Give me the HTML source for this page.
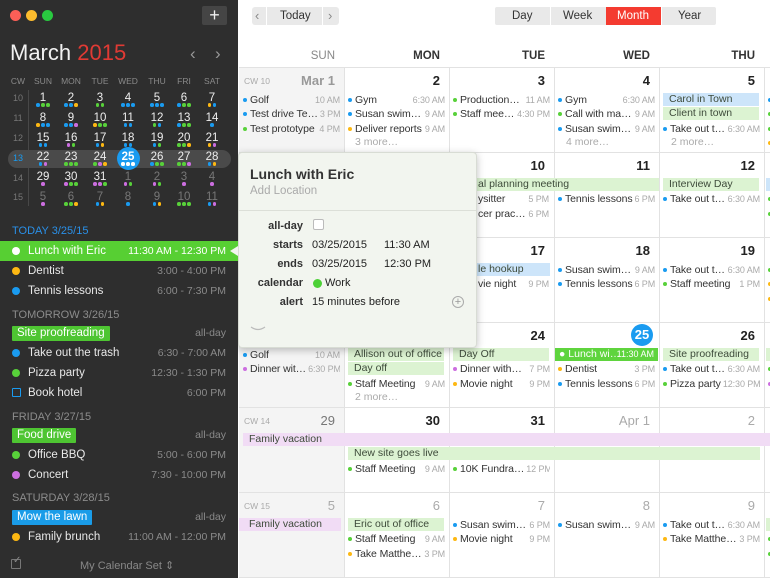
<!DOCTYPE html>
<html><head><meta charset="utf-8"><style>
*{margin:0;padding:0;box-sizing:border-box}
body{width:770px;height:578px;overflow:hidden;position:relative;font-family:"Liberation Sans",Arial,sans-serif;background:#fff}
.a{position:absolute;white-space:nowrap}
#sb{position:absolute;left:0;top:0;width:238px;height:578px;background:#2e2e2e;color:#e8e8e8}
.mh{position:absolute;top:76px;font-size:8.5px;color:#8a8a8a;width:28px;text-align:center;margin-left:-14px}
.mn{position:absolute;font-size:11.5px;color:#eee;width:28px;text-align:center;margin-left:-14px;line-height:13px}
.mn.gr{color:#777}
.cw{position:absolute;left:4px;width:28px;text-align:center;font-size:9px;color:#777}
.dd{position:absolute;width:28px;margin-left:-14px;text-align:center;font-size:0;line-height:4px}
.dd i{display:inline-block;width:3.5px;height:3.5px;border-radius:50%;margin:0 .7px}
.b{background:#1a9bf0}.g{background:#58d13a}.o{background:#fdb813}.p{background:#cc6ee0}.w{background:#fff}
.ah{position:absolute;left:12px;font-size:11px;color:#8c8c8c}
.ar{position:absolute;left:0;width:238px;height:20px;font-size:11.5px;line-height:20px;color:#e8e8e8}
.ar .dt{position:absolute;left:12px;top:6px;width:8px;height:8px;border-radius:50%}
.ar .n{position:absolute;left:28px}
.ar .t{position:absolute;right:12px;color:#8a8a8a;font-size:10.5px}
.chip{position:absolute;left:12px;height:15px;line-height:15px;padding:0 5px;font-size:11.5px;color:#fff;border-radius:1px}
.hd{position:absolute;top:50px;font-size:11.5px;width:96px;text-align:right;color:#333;font-weight:bold}
.vl{position:absolute;top:67px;width:1px;height:511px;background:#e2e2e2}
.hl{position:absolute;left:239px;width:531px;height:1px;background:#e2e2e2}
.dn{position:absolute;width:96px;text-align:right;font-size:13px;color:#222;font-weight:bold}
.dn.x{color:#aaa;font-weight:normal}
.e{position:absolute;width:97px;height:14px;font-size:10.5px;line-height:14px;color:#333;white-space:nowrap;display:flex;overflow:hidden;letter-spacing:-0.1px}
.e i{display:inline-block;width:4px;height:4px;border-radius:50%;margin:5px 3px 0 0;flex:none}
.e s{text-decoration:none;margin-left:auto;color:#aaa;font-size:9px;padding-left:2px;flex:none}
.mo{position:absolute;font-size:10.5px;color:#aaa}
.bar{position:absolute;height:13px;line-height:13px;font-size:10.5px;padding-left:6px;color:#3d4a3a;white-space:nowrap;overflow:hidden}
.gb{background:#dcf3d2}.bb{background:#cde5fa}.pb{background:#f1dcf5}
.cwl{position:absolute;font-size:8.5px;color:#aaa}
.pl{position:absolute;width:60px;text-align:right;left:243px;font-size:11px;color:#333;font-weight:bold}
.pv{position:absolute;left:312px;font-size:11px;color:#222}
</style></head><body>

<div class="a" style="left:252px;top:7px;width:87px;height:18px;background:#e9e9e9;border-radius:3px"></div>
<div class="a" style="left:266px;top:7px;width:1px;height:18px;background:#fff"></div>
<div class="a" style="left:322px;top:7px;width:1px;height:18px;background:#fff"></div>
<div class="a" style="left:255px;top:8px;font-size:13px;color:#888">‹</div>
<div class="a" style="left:328px;top:8px;font-size:13px;color:#888">›</div>
<div class="a" style="left:280px;top:10px;font-size:11.5px;color:#333">Today</div>
<div class="a" style="left:495px;top:7px;width:221px;height:18px;background:#e9e9e9;border-radius:2px"></div>
<div class="a" style="left:606px;top:7px;width:55px;height:18px;background:#f43b30"></div>
<div class="a" style="left:550px;top:7px;width:1px;height:18px;background:#fff"></div>
<div class="a" style="left:661px;top:7px;width:1px;height:18px;background:#fff"></div>
<div class="a" style="left:512px;top:10px;font-size:11.5px;color:#333">Day</div>
<div class="a" style="left:563px;top:10px;font-size:11.5px;color:#333">Week</div>
<div class="a" style="left:617px;top:10px;font-size:11.5px;color:#fff">Month</div>
<div class="a" style="left:678px;top:10px;font-size:11.5px;color:#333">Year</div>

<div class="a" style="left:239px;top:67px;width:105px;height:511px;background:#f4f4f4"></div>
<div class="hd" style="left:239px;color:#888;font-weight:normal">SUN</div>
<div class="hd" style="left:344px">MON</div>
<div class="hd" style="left:449px">TUE</div>
<div class="hd" style="left:554px">WED</div>
<div class="hd" style="left:659px">THU</div>
<div class="vl" style="left:344px"></div><div class="vl" style="left:449px"></div><div class="vl" style="left:554px"></div><div class="vl" style="left:659px"></div><div class="vl" style="left:764px"></div>
<div class="hl" style="top:67px"></div><div class="hl" style="top:152px"></div><div class="hl" style="top:237px"></div><div class="hl" style="top:322px"></div><div class="hl" style="top:407px"></div><div class="hl" style="top:492px"></div><div class="hl" style="top:577px"></div>

<div class="cwl" style="left:244px;top:76px">CW 10</div>
<div class="dn x" style="left:239px;top:73px;font-weight:bold;color:#999">Mar 1</div>
<div class="e" style="left:243px;top:93px"><i class="b"></i>Golf<s>10 AM</s></div>
<div class="e" style="left:243px;top:107px"><i class="b"></i>Test drive Te…<s>3 PM</s></div>
<div class="e" style="left:243px;top:122px"><i class="g"></i>Test prototype<s>4 PM</s></div>
<div class="dn" style="left:344px;top:73px">2</div>
<div class="e" style="left:348px;top:93px"><i class="b"></i>Gym<s>6:30 AM</s></div>
<div class="e" style="left:348px;top:107px"><i class="b"></i>Susan swim…<s>9 AM</s></div>
<div class="e" style="left:348px;top:122px"><i class="o"></i>Deliver reports<s>9 AM</s></div>
<div class="mo" style="left:355px;top:136px">3 more…</div>
<div class="dn" style="left:449px;top:73px">3</div>
<div class="e" style="left:453px;top:93px"><i class="g"></i>Production…<s>11 AM</s></div>
<div class="e" style="left:453px;top:107px"><i class="g"></i>Staff mee…<s>4:30 PM</s></div>
<div class="dn" style="left:554px;top:73px">4</div>
<div class="e" style="left:558px;top:93px"><i class="b"></i>Gym<s>6:30 AM</s></div>
<div class="e" style="left:558px;top:107px"><i class="g"></i>Call with ma…<s>9 AM</s></div>
<div class="e" style="left:558px;top:122px"><i class="b"></i>Susan swim…<s>9 AM</s></div>
<div class="mo" style="left:566px;top:136px">4 more…</div>
<div class="dn" style="left:659px;top:73px">5</div>
<div class="bar bb" style="left:663px;top:93px;width:96px">Carol in Town</div>
<div class="bar gb" style="left:663px;top:107px;width:96px">Client in town</div>
<div class="e" style="left:663px;top:122px"><i class="b"></i>Take out t…<s>6:30 AM</s></div>
<div class="mo" style="left:671px;top:136px">2 more…</div>
<div class="e" style="left:768px;top:93px"><i class="b"></i></div>
<div class="e" style="left:768px;top:107px"><i class="g"></i></div>
<div class="e" style="left:768px;top:122px"><i class="g"></i></div>
<div class="e" style="left:768px;top:136px"><i class="o"></i></div>

<div class="dn" style="left:449px;top:158px">10</div>
<div class="bar gb" style="left:449px;top:178px;width:210px;padding-left:29px">al planning meeting</div>
<div class="e" style="left:478px;top:192px;width:71px">ysitter<s>5 PM</s></div>
<div class="e" style="left:478px;top:207px;width:71px">cer prac…<s>6 PM</s></div>
<div class="dn" style="left:554px;top:158px">11</div>
<div class="e" style="left:558px;top:192px"><i class="b"></i>Tennis lessons<s>6 PM</s></div>
<div class="dn" style="left:659px;top:158px">12</div>
<div class="bar gb" style="left:663px;top:178px;width:96px">Interview Day</div>
<div class="e" style="left:663px;top:192px"><i class="b"></i>Take out t…<s>6:30 AM</s></div>
<div class="bar bb" style="left:766px;top:178px;width:10px"></div>
<div class="e" style="left:768px;top:192px"><i class="g"></i></div>
<div class="e" style="left:768px;top:207px"><i class="g"></i></div>

<div class="dn" style="left:449px;top:243px">17</div>
<div class="bar bb" style="left:449px;top:263px;width:101px;padding-left:29px">le hookup</div>
<div class="e" style="left:478px;top:277px;width:71px">vie night<s>9 PM</s></div>
<div class="dn" style="left:554px;top:243px">18</div>
<div class="e" style="left:558px;top:263px"><i class="b"></i>Susan swim…<s>9 AM</s></div>
<div class="e" style="left:558px;top:277px"><i class="b"></i>Tennis lessons<s>6 PM</s></div>
<div class="dn" style="left:659px;top:243px">19</div>
<div class="e" style="left:663px;top:263px"><i class="b"></i>Take out t…<s>6:30 AM</s></div>
<div class="e" style="left:663px;top:277px"><i class="g"></i>Staff meeting<s>1 PM</s></div>
<div class="e" style="left:768px;top:263px"><i class="g"></i></div>
<div class="e" style="left:768px;top:277px"><i class="o"></i></div>
<div class="e" style="left:768px;top:292px"><i class="o"></i></div>

<div class="e" style="left:243px;top:348px"><i class="b"></i>Golf<s>10 AM</s></div>
<div class="e" style="left:243px;top:362px"><i class="p"></i>Dinner wit…<s>6:30 PM</s></div>
<div class="bar gb" style="left:348px;top:348px;width:96px">Allison out of office</div>
<div class="bar gb" style="left:348px;top:362px;width:96px">Day off</div>
<div class="e" style="left:348px;top:377px"><i class="g"></i>Staff Meeting<s>9 AM</s></div>
<div class="mo" style="left:355px;top:391px">2 more…</div>
<div class="dn" style="left:449px;top:328px">24</div>
<div class="bar gb" style="left:453px;top:348px;width:96px">Day Off</div>
<div class="e" style="left:453px;top:362px"><i class="p"></i>Dinner with…<s>7 PM</s></div>
<div class="e" style="left:453px;top:377px"><i class="o"></i>Movie night<s>9 PM</s></div>
<div class="a" style="left:631px;top:324px;width:22px;height:22px;border-radius:50%;background:#1a9bf0;color:#fff;font-size:13px;font-weight:bold;text-align:center;line-height:22px">25</div>
<div class="bar" style="left:555px;top:348px;width:103px;background:#5fd43e;color:#fff;padding-left:4px">● Lunch wi… <span style="font-size:9px;position:absolute;right:4px">11:30 AM</span></div>
<div class="e" style="left:558px;top:362px"><i class="o"></i>Dentist<s>3 PM</s></div>
<div class="e" style="left:558px;top:377px"><i class="b"></i>Tennis lessons<s>6 PM</s></div>
<div class="dn" style="left:659px;top:328px">26</div>
<div class="bar gb" style="left:663px;top:348px;width:96px">Site proofreading</div>
<div class="e" style="left:663px;top:362px"><i class="b"></i>Take out t…<s>6:30 AM</s></div>
<div class="e" style="left:663px;top:377px"><i class="g"></i>Pizza party<s>12:30 PM</s></div>
<div class="bar gb" style="left:766px;top:348px;width:10px"></div>
<div class="e" style="left:768px;top:362px"><i class="g"></i></div>
<div class="e" style="left:768px;top:377px"><i class="p"></i></div>

<div class="cwl" style="left:244px;top:416px">CW 14</div>
<div class="dn" style="left:239px;top:413px;color:#777;font-weight:normal">29</div>
<div class="dn" style="left:344px;top:413px">30</div>
<div class="dn" style="left:449px;top:413px">31</div>
<div class="dn x" style="left:554px;top:413px">Apr 1</div>
<div class="dn x" style="left:659px;top:413px">2</div>
<div class="bar pb" style="left:243px;top:433px;width:527px">Family vacation</div>
<div class="bar gb" style="left:348px;top:447px;width:412px">New site goes live</div>
<div class="e" style="left:348px;top:462px"><i class="g"></i>Staff Meeting<s>9 AM</s></div>
<div class="e" style="left:453px;top:462px"><i class="g"></i>10K Fundra…<s>12 PM</s></div>

<div class="cwl" style="left:244px;top:501px">CW 15</div>
<div class="dn x" style="left:239px;top:498px">5</div>
<div class="dn x" style="left:344px;top:498px">6</div>
<div class="dn x" style="left:449px;top:498px">7</div>
<div class="dn x" style="left:554px;top:498px">8</div>
<div class="dn x" style="left:659px;top:498px">9</div>
<div class="bar pb" style="left:239px;top:518px;width:102px;padding-left:10px">Family vacation</div>
<div class="bar gb" style="left:348px;top:518px;width:96px">Eric out of office</div>
<div class="e" style="left:348px;top:532px"><i class="g"></i>Staff Meeting<s>9 AM</s></div>
<div class="e" style="left:348px;top:547px"><i class="o"></i>Take Matthe…<s>3 PM</s></div>
<div class="e" style="left:453px;top:518px"><i class="b"></i>Susan swim…<s>6 PM</s></div>
<div class="e" style="left:453px;top:532px"><i class="o"></i>Movie night<s>9 PM</s></div>
<div class="e" style="left:558px;top:518px"><i class="b"></i>Susan swim…<s>9 AM</s></div>
<div class="e" style="left:663px;top:518px"><i class="b"></i>Take out t…<s>6:30 AM</s></div>
<div class="e" style="left:663px;top:532px"><i class="o"></i>Take Matthe…<s>3 PM</s></div>
<div class="bar gb" style="left:766px;top:518px;width:10px"></div>
<div class="e" style="left:768px;top:532px"><i class="g"></i></div>
<div class="e" style="left:768px;top:547px"><i class="g"></i></div>

<div class="a" style="left:238px;top:152px;width:239px;height:196px;background:#f2f5ef;border:1px solid #d8dcd4;border-radius:4px;box-shadow:0 2px 8px rgba(0,0,0,.25)"></div>
<div class="a" style="left:250px;top:166px;font-size:14px;font-weight:bold;color:#333">Lunch with Eric</div>
<div class="a" style="left:250px;top:185px;font-size:11.5px;color:#aaa">Add Location</div>
<div class="a" style="left:239px;top:210px;width:237px;height:1px;background:#dcdfd8"></div>
<div class="pl" style="top:220px">all-day</div>
<div class="a" style="left:313px;top:219px;width:11px;height:11px;border:1px solid #bbb;border-radius:2px;background:#fff"></div>
<div class="pl" style="top:239px">starts</div><div class="pv" style="top:239px">03/25/2015</div><div class="pv" style="top:239px;left:384px">11:30 AM</div>
<div class="pl" style="top:258px">ends</div><div class="pv" style="top:258px">03/25/2015</div><div class="pv" style="top:258px;left:384px">12:30 PM</div>
<div class="pl" style="top:277px">calendar</div><div class="a" style="left:313px;top:279px;width:9px;height:9px;border-radius:50%;background:#4cd137"></div><div class="pv" style="top:277px;left:325px">Work</div>
<div class="pl" style="top:296px">alert</div><div class="pv" style="top:296px">15 minutes before</div>
<div class="a" style="left:452px;top:296px;width:12px;height:12px;border:1px solid #aaa;border-radius:50%;color:#999;font-size:11px;line-height:10px;text-align:center">+</div>
<svg class="a" style="left:250px;top:326px" width="16" height="6"><path d="M1 1 Q8 6 15 1" stroke="#bbb" fill="none" stroke-width="1.2"/></svg>

<div id="sb">
<div class="a" style="left:10px;top:10px;width:11px;height:11px;border-radius:50%;background:#fc5f57"></div>
<div class="a" style="left:26px;top:10px;width:11px;height:11px;border-radius:50%;background:#fdbc2e"></div>
<div class="a" style="left:42px;top:10px;width:11px;height:11px;border-radius:50%;background:#29c940"></div>
<div class="a" style="left:202px;top:6px;width:25px;height:19px;background:#454545;border-radius:2px;color:#eee;font-size:18px;text-align:center;line-height:18px">+</div>
<div class="a" style="left:10px;top:40px;font-size:22px;color:#f2f2f2">March <span style="color:#e03a34">2015</span></div>
<div class="a" style="left:190px;top:44px;font-size:17px;color:#999">‹</div>
<div class="a" style="left:215px;top:44px;font-size:17px;color:#999">›</div>

<div class="mh" style="left:18px">CW</div><div class="mh" style="left:43px">SUN</div><div class="mh" style="left:71px">MON</div><div class="mh" style="left:100px">TUE</div><div class="mh" style="left:128px">WED</div><div class="mh" style="left:157px">THU</div><div class="mh" style="left:184px">FRI</div><div class="mh" style="left:212px">SAT</div>
<div class="a" style="left:28px;top:90px;width:1px;height:116px;background:#484848"></div>
<div class="a" style="left:8px;top:150px;width:223px;height:18px;border-radius:9px;background:#4a4a4a"></div>
<div class="a" style="left:117px;top:147px;width:23px;height:23px;border-radius:50%;background:#1a9bf0"></div>

<div class="cw" style="top:93px">10</div><div class="cw" style="top:113px">11</div><div class="cw" style="top:133px">12</div><div class="cw" style="top:153px;color:#1a9bf0">13</div><div class="cw" style="top:173px">14</div><div class="cw" style="top:192px">15</div>

<div class="mn" style="left:43px;top:92px">1</div><div class="mn" style="left:71px;top:92px">2</div><div class="mn" style="left:100px;top:92px">3</div><div class="mn" style="left:128px;top:92px">4</div><div class="mn" style="left:157px;top:92px">5</div><div class="mn" style="left:184px;top:92px">6</div><div class="mn" style="left:212px;top:92px">7</div>
<div class="dd" style="left:43px;top:103px"><i class="b"></i><i class="g"></i><i class="g"></i></div><div class="dd" style="left:71px;top:103px"><i class="b"></i><i class="b"></i><i class="o"></i></div><div class="dd" style="left:100px;top:103px"><i class="g"></i><i class="g"></i></div><div class="dd" style="left:128px;top:103px"><i class="b"></i><i class="b"></i><i class="b"></i></div><div class="dd" style="left:157px;top:103px"><i class="b"></i><i class="b"></i><i class="b"></i></div><div class="dd" style="left:184px;top:103px"><i class="b"></i><i class="g"></i><i class="g"></i></div><div class="dd" style="left:212px;top:103px"><i class="o"></i><i class="b"></i></div>

<div class="mn" style="left:43px;top:112px">8</div><div class="mn" style="left:71px;top:112px">9</div><div class="mn" style="left:100px;top:112px">10</div><div class="mn" style="left:128px;top:112px">11</div><div class="mn" style="left:157px;top:112px">12</div><div class="mn" style="left:184px;top:112px">13</div><div class="mn" style="left:212px;top:112px">14</div>
<div class="dd" style="left:43px;top:123px"><i class="o"></i><i class="b"></i><i class="b"></i></div><div class="dd" style="left:71px;top:123px"><i class="b"></i><i class="b"></i><i class="p"></i></div><div class="dd" style="left:100px;top:123px"><i class="o"></i><i class="g"></i><i class="g"></i></div><div class="dd" style="left:128px;top:123px"><i class="b"></i><i class="b"></i></div><div class="dd" style="left:157px;top:123px"><i class="g"></i><i class="b"></i></div><div class="dd" style="left:184px;top:123px"><i class="b"></i><i class="g"></i><i class="g"></i></div><div class="dd" style="left:212px;top:123px"><i class="b"></i></div>

<div class="mn" style="left:43px;top:132px">15</div><div class="mn" style="left:71px;top:132px">16</div><div class="mn" style="left:100px;top:132px">17</div><div class="mn" style="left:128px;top:132px">18</div><div class="mn" style="left:157px;top:132px">19</div><div class="mn" style="left:184px;top:132px">20</div><div class="mn" style="left:212px;top:132px">21</div>
<div class="dd" style="left:43px;top:143px"><i class="b"></i><i class="b"></i></div><div class="dd" style="left:71px;top:143px"><i class="p"></i><i class="g"></i></div><div class="dd" style="left:100px;top:143px"><i class="b"></i><i class="o"></i></div><div class="dd" style="left:128px;top:143px"><i class="b"></i><i class="b"></i></div><div class="dd" style="left:157px;top:143px"><i class="b"></i><i class="g"></i></div><div class="dd" style="left:184px;top:143px"><i class="g"></i><i class="g"></i><i class="o"></i></div><div class="dd" style="left:212px;top:143px"><i class="o"></i><i class="p"></i></div>

<div class="mn" style="left:43px;top:151px">22</div><div class="mn" style="left:71px;top:151px">23</div><div class="mn" style="left:100px;top:151px">24</div><div class="mn" style="left:128px;top:151px;font-weight:bold;color:#fff">25</div><div class="mn" style="left:157px;top:151px">26</div><div class="mn" style="left:184px;top:151px">27</div><div class="mn" style="left:212px;top:151px">28</div>
<div class="dd" style="left:43px;top:162px"><i class="b"></i><i class="p"></i></div><div class="dd" style="left:71px;top:162px"><i class="g"></i><i class="g"></i><i class="g"></i></div><div class="dd" style="left:100px;top:162px"><i class="g"></i><i class="p"></i><i class="o"></i></div><div class="dd" style="left:128px;top:162px"><i class="w"></i><i class="w"></i><i class="w"></i></div><div class="dd" style="left:157px;top:162px"><i class="b"></i><i class="g"></i><i class="g"></i></div><div class="dd" style="left:184px;top:162px"><i class="g"></i><i class="g"></i><i class="p"></i></div><div class="dd" style="left:212px;top:162px"><i class="b"></i><i class="o"></i></div>

<div class="mn" style="left:43px;top:171px">29</div><div class="mn" style="left:71px;top:171px">30</div><div class="mn" style="left:100px;top:171px">31</div><div class="mn gr" style="left:128px;top:171px">1</div><div class="mn gr" style="left:157px;top:171px">2</div><div class="mn gr" style="left:184px;top:171px">3</div><div class="mn gr" style="left:212px;top:171px">4</div>
<div class="dd" style="left:43px;top:182px"><i class="p"></i></div><div class="dd" style="left:71px;top:182px"><i class="p"></i><i class="g"></i><i class="g"></i></div><div class="dd" style="left:100px;top:182px"><i class="p"></i><i class="p"></i><i class="g"></i></div><div class="dd" style="left:128px;top:182px"><i class="p"></i><i class="g"></i></div><div class="dd" style="left:157px;top:182px"><i class="p"></i><i class="g"></i></div><div class="dd" style="left:184px;top:182px"><i class="p"></i></div><div class="dd" style="left:212px;top:182px"><i class="p"></i></div>

<div class="mn gr" style="left:43px;top:191px">5</div><div class="mn gr" style="left:71px;top:191px">6</div><div class="mn gr" style="left:100px;top:191px">7</div><div class="mn gr" style="left:128px;top:191px">8</div><div class="mn gr" style="left:157px;top:191px">9</div><div class="mn gr" style="left:184px;top:191px">10</div><div class="mn gr" style="left:212px;top:191px">11</div>
<div class="dd" style="left:43px;top:202px"><i class="p"></i></div><div class="dd" style="left:71px;top:202px"><i class="g"></i><i class="g"></i><i class="o"></i></div><div class="dd" style="left:100px;top:202px"><i class="b"></i><i class="o"></i></div><div class="dd" style="left:128px;top:202px"><i class="b"></i></div><div class="dd" style="left:157px;top:202px"><i class="b"></i><i class="o"></i></div><div class="dd" style="left:184px;top:202px"><i class="g"></i><i class="g"></i><i class="g"></i></div><div class="dd" style="left:212px;top:202px"><i class="b"></i><i class="p"></i></div>

<div class="ah" style="top:225px;color:#2a90e8">TODAY 3/25/15</div>
<div class="a" style="left:0;top:241px;width:238px;height:20px;background:#57cf33"></div>
<div class="a" style="left:230px;top:246px;width:0;height:0;border-top:5px solid transparent;border-bottom:5px solid transparent;border-right:8px solid #f2f5ef"></div>
<div class="ar" style="top:241px;color:#fff"><span class="dt w"></span><span class="n">Lunch with Eric</span><span class="t" style="color:#fff;right:12px">11:30 AM - 12:30 PM</span></div>
<div class="ar" style="top:261px"><span class="dt o"></span><span class="n">Dentist</span><span class="t">3:00 - 4:00 PM</span></div>
<div class="ar" style="top:281px"><span class="dt b"></span><span class="n">Tennis lessons</span><span class="t">6:00 - 7:30 PM</span></div>
<div class="ah" style="top:309px">TOMORROW 3/26/15</div>
<div class="chip" style="top:326px;background:#4ec532">Site proofreading</div>
<div class="ar" style="top:323px"><span class="t">all-day</span></div>
<div class="ar" style="top:343px"><span class="dt b"></span><span class="n">Take out the trash</span><span class="t">6:30 - 7:00 AM</span></div>
<div class="ar" style="top:363px"><span class="dt g"></span><span class="n">Pizza party</span><span class="t">12:30 - 1:30 PM</span></div>
<div class="ar" style="top:383px"><span class="dt" style="border:1px solid #1a9bf0;border-radius:1px;width:9px;height:9px;top:5px"></span><span class="n">Book hotel</span><span class="t">6:00 PM</span></div>
<div class="ah" style="top:411px">FRIDAY 3/27/15</div>
<div class="chip" style="top:428px;background:#4ec532">Food drive</div>
<div class="ar" style="top:425px"><span class="t">all-day</span></div>
<div class="ar" style="top:445px"><span class="dt g"></span><span class="n">Office BBQ</span><span class="t">5:00 - 6:00 PM</span></div>
<div class="ar" style="top:465px"><span class="dt p"></span><span class="n">Concert</span><span class="t">7:30 - 10:00 PM</span></div>
<div class="ah" style="top:492px">SATURDAY 3/28/15</div>
<div class="chip" style="top:510px;background:#1a9ce8">Mow the lawn</div>
<div class="ar" style="top:507px"><span class="t">all-day</span></div>
<div class="ar" style="top:527px"><span class="dt o"></span><span class="n">Family brunch</span><span class="t">11:00 AM - 12:00 PM</span></div>
<div class="a" style="left:11px;top:559px;width:10px;height:10px;border:1px solid #777;border-radius:1px"></div>
<div class="a" style="left:13px;top:555px;font-size:10px;color:#888">✓</div>
<div class="a" style="left:80px;top:559px;font-size:11px;color:#888">My Calendar Set ⇕</div>
</div>
</body></html>
